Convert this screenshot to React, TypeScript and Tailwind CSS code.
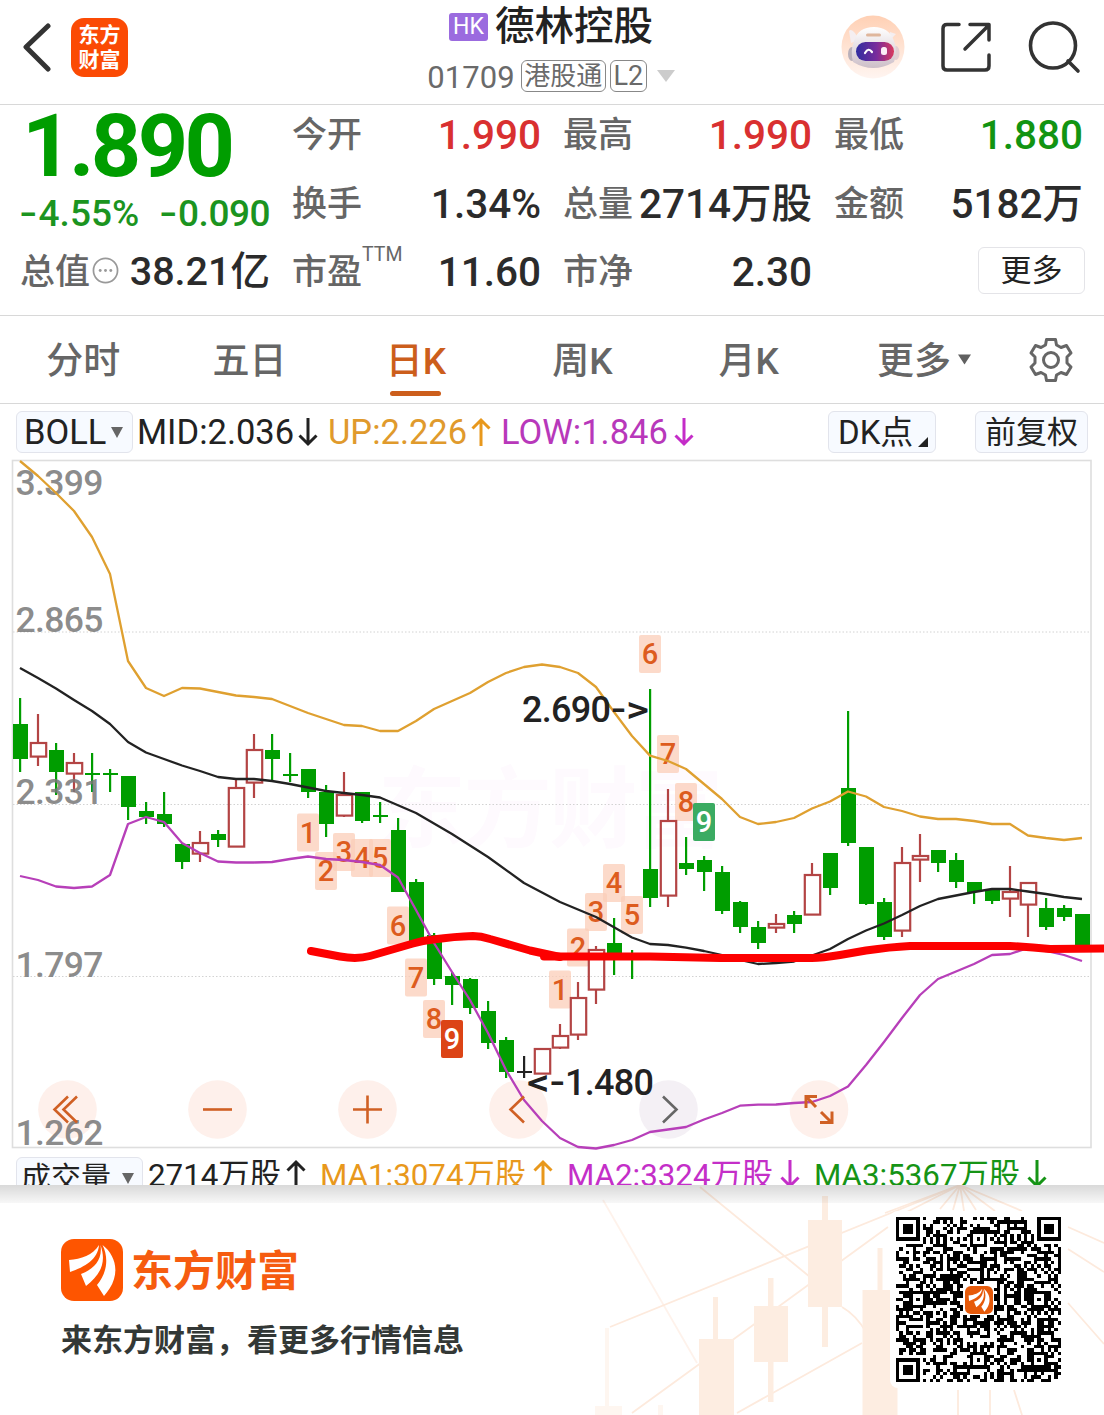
import { type ReactNode } from "react";

import { clsx } from "clsx";

type Tone = "up" | "down" | "flat";

// [tone, high, low, body top, body bottom]
type Candle = [Tone, number, number, number, number];

const CANDLES: Candle[] = [
  ["down", 698, 772, 724, 759],
  ["up", 714, 766, 742, 757],
  ["down", 743, 795, 750, 772],
  ["up", 753, 792, 762, 774],
  ["down", 753, 792, 773, 775],
  ["down", 769, 792, 773, 775],
  ["down", 776, 820, 776, 807],
  ["down", 802, 824, 811, 817],
  ["down", 792, 827, 814, 824],
  ["down", 843, 869, 844, 862],
  ["up", 831, 862, 842, 854],
  ["down", 830, 847, 834, 840],
  ["up", 780, 847, 787, 847],
  ["up", 734, 798, 749, 783],
  ["down", 734, 782, 750, 759],
  ["down", 753, 782, 774, 776],
  ["down", 769, 798, 769, 792],
  ["down", 785, 837, 792, 824],
  ["up", 772, 817, 794, 816],
  ["down", 792, 823, 792, 821],
  ["down", 802, 823, 815, 817],
  ["down", 818, 892, 830, 892],
  ["down", 879, 942, 882, 942],
  ["down", 933, 985, 935, 979],
  ["down", 972, 1005, 976, 985],
  ["down", 978, 1014, 979, 1008],
  ["down", 1001, 1049, 1011, 1043],
  ["down", 1037, 1078, 1040, 1072],
  ["flat", 1056, 1078, 1071, 1073],
  ["up", 1048, 1074, 1048, 1074],
  ["up", 1024, 1049, 1035, 1048],
  ["up", 982, 1040, 997, 1035],
  ["up", 946, 1004, 949, 990],
  ["down", 918, 975, 943, 957],
  ["down", 950, 979, 956, 958],
  ["down", 689, 907, 869, 898],
  ["up", 789, 907, 820, 896],
  ["down", 837, 875, 863, 869],
  ["down", 856, 891, 860, 872],
  ["down", 866, 914, 872, 911],
  ["down", 901, 933, 902, 927],
  ["down", 921, 949, 927, 943],
  ["up", 914, 933, 923, 928],
  ["down", 911, 933, 915, 924],
  ["up", 863, 915, 874, 915],
  ["down", 853, 895, 853, 888],
  ["down", 711, 846, 788, 843],
  ["down", 847, 905, 847, 904],
  ["down", 898, 940, 902, 937],
  ["up", 847, 937, 862, 931],
  ["up", 834, 882, 855, 860],
  ["down", 850, 872, 850, 863],
  ["down", 853, 888, 860, 882],
  ["down", 882, 904, 882, 892],
  ["down", 888, 904, 889, 901],
  ["up", 866, 917, 891, 899],
  ["up", 882, 937, 882, 905],
  ["down", 898, 930, 908, 927],
  ["down", 905, 921, 908, 917],
  ["down", 914, 948, 914, 948],
];

const UPPER =
  "20,461 38,476 56,493 74,511 92,537 110,574 128,661 146,688 164,696 182,688 200,688.5 218,692 236,695.5 254,697 272,699 290,706 308,713 326,719 344,725 362,726 380,731 398,731 416,721 434,709 452,701 470,693 488,682 506,673 524,667 542,664.5 560,667 578,673 596,687 614,712 632,736 650,755.6 668,761 686,769 704,784 722,799 740,817 758,824 776,822 794,818 812,808.5 830,801.5 848,791.5 866,796.5 884,807 902,811 920,816.5 938,819 956,819 974,821 992,824 1010,824 1028,835.5 1046,838 1064,840 1082,838";
const MIDDLE =
  "20,668 38,678 56,688.5 74,700 92,711 110,724 128,742 146,752.5 164,759 182,765.5 200,771 218,777 236,779 254,779 272,781 290,784 308,787.5 326,791 344,793 362,795 380,797.5 416,813 452,834 488,857 524,883 560,902 596,917 632,937.5 650,944 668,945 686,947.7 704,951 722,955 740,960 758,964 776,963 794,961.5 812,955.5 830,949 848,939 866,930.5 884,923.5 902,915 920,906 938,899 956,895.5 974,892 992,889 1010,889 1028,891.5 1046,894 1064,897 1082,899";
const LOWER =
  "20,876 38,880 56,886.5 74,888 92,886.5 110,875 128,824 146,817 164,822 182,843 200,853 218,861.5 236,862.5 254,862.5 272,862 290,859 308,856.5 326,859 344,860 362,862 380,865 398,877.5 416,910 434,943 452,972 470,1000 488,1033 506,1070 524,1100 542,1121 560,1138 578,1147 596,1148.5 614,1145 632,1140 650,1132 668,1129.5 686,1127 704,1119.5 722,1113 740,1105.7 758,1104.7 776,1104.5 794,1103 812,1102 830,1096 848,1086.5 866,1065 884,1042 902,1018 920,995 938,979 956,971.5 974,964 992,955 1010,954 1028,948 1046,951 1064,955 1082,961";

const SUPPORT_LEFT =
  "M311 951 L340 956.5 Q357 959.5 370 956 L413 943.5 Q423 940.5 433 939.5 Q455 936.5 473 936 Q481 936 490 939 L530 950.5 L560 957";
const SUPPORT_RIGHT =
  "M544 956.5 H650 L720 958 H812 Q822 958 840 955 L866 950.5 Q890 947 910 946 H1010 Q1030 947 1050 949 L1110 948.5";

// [digit, x centre, y centre]
const MARKS: [string, number, number][] = [
  ["1", 308, 832.5],
  ["2", 326, 871],
  ["3", 344, 852],
  ["4", 362, 858],
  ["5", 380, 858],
  ["6", 398, 925.5],
  ["7", 416, 977.5],
  ["8", 434, 1019],
  ["1", 560, 989.5],
  ["2", 578, 947.5],
  ["3", 596, 912],
  ["4", 614, 883],
  ["5", 632, 915],
  ["6", 650, 654],
  ["7", 668, 754],
  ["8", 686, 802],
];

const AXIS: [string, number][] = [
  ["3.399", 494.5],
  ["2.865", 631.5],
  ["2.331", 803.5],
  ["1.797", 976.5],
  ["1.262", 1144.5],
];

const TONES: Record<Tone, string> = {
  up: "#b34444",
  down: "#009d00",
  flat: "#222222",
};

function CandleShape({ candle, x }: { candle: Candle; x: number }) {
  const [tone, high, low, top, bottom] = candle;
  const color = TONES[tone];

  if (tone === "up") {
    return (
      <g stroke={color} strokeWidth={2.2} fill="none">
        <path d={`M${x} ${high}V${top}M${x} ${bottom}V${low}`} />
        <rect x={x - 7.2} y={top + 1} width={15.4} height={bottom - top - 1.4} />
      </g>
    );
  }
  return (
    <g fill={color}>
      <rect x={x - 1} y={high} width={2.2} height={low - high} />
      <rect x={x - 7} y={top} width={15} height={bottom - top} />
    </g>
  );
}

type MarkProps = {
  x: number;
  y: number;
  digit: string;
  fill?: string;
  color?: string;
  solid?: boolean;
};

function Mark({
  x,
  y,
  digit,
  fill = "#fbcdb8",
  color = "#dd5c1e",
  solid = false,
}: MarkProps) {
  return (
    <g>
      <rect
        x={x - 11}
        y={y - 19}
        width={22}
        height={38}
        rx={2}
        fill={fill}
        fillOpacity={solid ? 1 : 0.75}
      />
      <text
        x={x}
        y={y + 10}
        textAnchor="middle"
        fontSize={29}
        fontWeight={500}
        fill={color}
      >
        {digit}
      </text>
    </g>
  );
}

function KLineChart() {
  return (
    <svg
      viewBox="0 456 1104 696"
      className="block h-[696px] w-[1104px]"
      fontFamily='Roboto, "Noto Sans CJK SC", sans-serif'
    >
      <text x="378" y="840" fontSize="88" fontWeight="700" textLength="345" fill="#fefafe">
        东方财富
      </text>
      <path
        d="M13 632H1090M13 804.5H1090M13 976.5H1090"
        stroke="#d2d2d2"
        strokeDasharray="1.5 2"
      />
      <rect
        x="12.5"
        y="460.5"
        width="1078.5"
        height="687"
        fill="none"
        stroke="#dedede"
        strokeWidth="1.6"
      />

      {[67.5, 217.5, 367.5, 518.5, 819].map((x) => (
        <circle key={x} cx={x} cy="1109.5" r="29.3" fill="#fef0eb" />
      ))}
      <circle cx="668.5" cy="1109.5" r="29.3" fill="#f4f0f5" />

      {MARKS.map(([digit, x, y]) => (
        <Mark key={`${digit}-${x}`} digit={digit} x={x} y={y} />
      ))}
      {CANDLES.map((candle, i) => (
        <CandleShape key={i} candle={candle} x={20 + i * 18} />
      ))}

      <g fontSize="35.5" fontWeight="500" fill="#777777" fillOpacity="0.85">
        {AXIS.map(([label, y]) => (
          <text key={label} x="15.5" y={y} textLength="88">
            {label}
          </text>
        ))}
      </g>

      <g fill="none" strokeWidth="2.3" strokeLinejoin="round">
        <polyline points={UPPER} stroke="#dfa030" />
        <polyline points={MIDDLE} stroke="#222222" />
        <polyline points={LOWER} stroke="#b73fb9" />
      </g>

      <Mark digit="9" x={452} y={1039} fill="#dc4416" color="#ffffff" solid />
      <Mark digit="9" x={704} y={822} fill="#3bab62" color="#ffffff" solid />

      <g fontSize="36" fontWeight="500" fill="#222222">
        <text x="522" y="722" textLength="89">
          2.690
        </text>
        <text x="611" y="722" textLength="38" lengthAdjust="spacingAndGlyphs">
          -&gt;
        </text>
        <text x="527" y="1094.5" textLength="38" lengthAdjust="spacingAndGlyphs">
          &lt;-
        </text>
        <text x="565" y="1094.5" textLength="89">
          1.480
        </text>
      </g>

      <g
        fill="none"
        stroke="#fd0000"
        strokeWidth="8"
        strokeLinecap="round"
        strokeLinejoin="round"
      >
        <path d={SUPPORT_LEFT} />
        <path d={SUPPORT_RIGHT} />
      </g>

      <g fill="none" stroke="#d06024" strokeWidth="2.6">
        <path d="M68 1096.5L54.5 1109.5L68 1122.5M77 1096.5L63.5 1109.5L77 1122.5" />
        <path d="M203 1109.5H232" />
        <path d="M353 1109.5H382M367.5 1095.5V1123.5" />
        <path d="M524 1096.5L510.5 1109.5L524 1122.5" />
        <path
          strokeWidth="3"
          d="M806 1108V1096.5H817M806.5 1097L816 1107M821 1112L831 1122M820 1122.5H832V1111.5"
        />
        <path stroke="#666666" d="M663 1096.5L676.5 1109.5L663 1122.5" />
      </g>
    </svg>
  );
}

function LogoMark({ className, fill }: { className: string; fill: string }) {
  return (
    <svg viewBox="0 0 62 62" className={className}>
      <rect width="62" height="62" rx="13" fill={fill} />
      <g fill="#fff">
        <path d="M8 21C20 20 32 16 38 6C37 20 24 28 9 33Z" />
        <path d="M39.500 6C42 22 31 31 20 35L25 47C39 36 46 24 39.500 6Z" />
        <path d="M41.500 6C52 14 57 27 53 40C51 47 47 52 43 57L36 46C46 34 48 19 41.500 6Z" />
      </g>
    </svg>
  );
}

function RobotAvatar() {
  return (
    <svg viewBox="0 0 64 64" className="size-16">
      <defs>
        <linearGradient id="halo" x1="0" y1="0" x2="0" y2="1">
          <stop offset="0" stopColor="#ffd0b4" />
          <stop offset="1" stopColor="#fff5f1" />
        </linearGradient>
        <linearGradient id="visor">
          <stop offset="0" stopColor="#2f2da0" />
          <stop offset="0.55" stopColor="#7a2c9c" />
          <stop offset="1" stopColor="#d93a5e" />
        </linearGradient>
        <linearGradient id="shell" x1="0" y1="0" x2="0" y2="1">
          <stop offset="0" stopColor="#ffffff" />
          <stop offset="1" stopColor="#cdbfc8" />
        </linearGradient>
      </defs>
      <circle cx="32" cy="32" r="31.5" fill="url(#halo)" />
      <ellipse cx="11" cy="39" rx="4" ry="7" fill="#b9b0ba" />
      <ellipse cx="55" cy="38" rx="3.5" ry="7" fill="#e3cfd2" />
      <path d="M8 16Q10 13 14 18L18 25L10 28ZM55 19L49 17L48 26Z" fill="#f5eef0" />
      <path
        d="M13 26Q17 12 33 12Q48 12 53 26Q57 36 53 47Q32 59 12 47Q9 36 13 26Z"
        fill="url(#shell)"
      />
      <rect x="25" y="18.5" width="15" height="3" rx="1.5" fill="#dfb69c" />
      <rect x="15" y="27" width="38" height="19" rx="9.5" fill="url(#visor)" />
      <path
        d="M24 38Q27.5 32 31 37"
        fill="none"
        stroke="#fff"
        strokeWidth="2.2"
        strokeLinecap="round"
      />
      <rect x="40" y="32" width="6" height="8" rx="2.5" fill="#fbeef6" />
    </svg>
  );
}

function Header() {
  return (
    <header className="flex h-[105px] border-b-[1.5px] border-[#d8d8d8]">
      <div className="flex w-[372px] items-start pt-[18px] pl-[22px]">
        <svg viewBox="0 0 30 50" className="mt-1 h-[50px] w-[30px]">
          <path
            d="M26 4L4 25L26 47"
            fill="none"
            stroke="#333"
            strokeWidth="5"
            strokeLinejoin="round"
            strokeLinecap="round"
          />
        </svg>
        <div className="ml-[19px] flex h-[59px] w-[57px] flex-col items-center justify-center gap-[3px] rounded-[13px] bg-[#fb4a04] text-[21px] leading-[22px] font-bold text-white">
          <span>东方</span>
          <span>财富</span>
        </div>
      </div>

      <div className="flex w-[358px] flex-col items-center">
        <div className="mt-1 flex h-[45px] items-center gap-[7px]">
          <span className="flex h-7 w-[39px] items-center justify-center rounded-[3px] bg-[#9b6bdf] text-[23px] leading-none text-white">
            HK
          </span>
          <h1 className="text-[39.5px] leading-none font-medium text-[#222]">德林控股</h1>
        </div>
        <div className="mt-[11px] flex h-8 items-center leading-none text-[#6a6a6a]">
          <span className="pt-[2px] text-[31px] tracking-[0.1px]">01709</span>
          <span className="ml-[6px] flex h-8 w-[85px] items-center justify-center rounded-md border-[1.5px] border-[#888] text-[26px]">
            港股通
          </span>
          <span className="ml-1 flex h-8 w-[37px] items-center justify-center rounded-md border-[1.5px] border-[#888] text-[27px]">
            L2
          </span>
          <svg viewBox="0 0 18 12" className="ml-[10px] h-3 w-[18px]">
            <path d="M0 0H18L9 12Z" fill="#ccc" />
          </svg>
        </div>
      </div>

      <div className="flex flex-1 items-start pt-[15px] pl-[111px]">
        <RobotAvatar />
        <svg
          viewBox="0 0 54 54"
          className="mt-[5px] ml-[34px] size-[54px]"
          fill="none"
          stroke="#333"
          strokeWidth="3.5"
          strokeLinecap="round"
          strokeLinejoin="round"
        >
          <path d="M20 4.5H8Q4 4.5 4 8.5V46Q4 50 8 50H46Q50 50 50 46V35M31 4.5H50V20M49 6L26 29" />
        </svg>
        <svg
          viewBox="0 0 54 54"
          className="mt-[5px] ml-[34px] size-[54px]"
          fill="none"
          stroke="#333"
          strokeWidth="3.6"
          strokeLinecap="round"
        >
          <circle cx="26" cy="25.5" r="22.5" />
          <path d="M41 41L51 51" />
        </svg>
      </div>
    </header>
  );
}

type QuoteCellProps = {
  label: ReactNode;
  value: string;
  className?: string;
};

function QuoteCell({ label, value, className }: QuoteCellProps) {
  return (
    <div className="flex items-center justify-between leading-none font-medium whitespace-nowrap">
      <span className="pt-px text-[35px] text-[#666]">{label}</span>
      <span className={clsx("pt-px text-[40.5px]", className ?? "text-[#2b2b2b]")}>
        {value}
      </span>
    </div>
  );
}

function Minus() {
  return <span className="mr-[4px] ml-[2px] inline-block origin-center scale-x-140">-</span>;
}

function QuotePanel() {
  return (
    <section className="flex h-[211px] gap-[22px] border-b-[1.5px] border-[#d8d8d8] pr-[21px] pl-5">
      <div className="flex w-[250px] flex-col leading-none font-medium whitespace-nowrap text-[#009d00]">
        <div className="h-[86px] pl-[2px] text-[88px] leading-[81px] font-bold tracking-[-3.6px]">
          1.890
        </div>
        <div className="flex h-[44px] items-center justify-between text-[37px] text-[#1b9420]">
          <span>
            <Minus />
            4.55%
          </span>
          <span className="tracking-[-0.5px]">
            <Minus />
            0.090
          </span>
        </div>
        <div className="mt-[15px] flex h-[44px] items-center">
          <span className="text-[35px] text-[#666]">总值</span>
          <svg viewBox="0 0 28 28" className="-mt-1 ml-[2px] size-[27px]">
            <circle cx="14" cy="14" r="12.5" fill="none" stroke="#999" strokeWidth="1.8" />
            <g fill="#999">
              <circle cx="8.5" cy="14" r="1.5" />
              <circle cx="14" cy="14" r="1.5" />
              <circle cx="19.5" cy="14" r="1.5" />
            </g>
          </svg>
          <span className="ml-auto text-[39.5px] text-[#2b2b2b]">38.21亿</span>
        </div>
      </div>
      <div className="grid flex-1 grid-cols-3 grid-rows-[60px_77px_60px] gap-x-[22px]">
        <QuoteCell label="今开" value="1.990" className="text-[#d93030]" />
        <QuoteCell label="最高" value="1.990" className="text-[#d93030]" />
        <QuoteCell label="最低" value="1.880" className="text-[#129412]" />
        <QuoteCell label="换手" value="1.34%" />
        <QuoteCell label="总量" value="2714万股" />
        <QuoteCell label="金额" value="5182万" />
        <QuoteCell
          label={
            <span className="flex">
              市盈
              <sup className="top-[-8px] -mt-[2px] text-[19.5px] leading-none font-normal">
                TTM
              </sup>
            </span>
          }
          value="11.60"
        />
        <QuoteCell label="市净" value="2.30" />
        <div className="flex items-center justify-end">
          <button className="mt-[-4px] -mr-[2px] h-[47px] w-[107px] rounded-md border-[1.5px] border-[#e4e4e8] text-[31px] leading-none text-[#222]">
            更多
          </button>
        </div>
      </div>
    </section>
  );
}

const TABS = ["分时", "五日", "日K", "周K", "月K"];

function PeriodTabs() {
  return (
    <nav className="flex h-[88px] border-b-[1.5px] border-[#d8d8d8] text-[37px] leading-none font-medium text-[#666]">
      {TABS.map((tab) => (
        <div
          key={tab}
          className={clsx(
            "flex w-[166.4px] flex-col items-center pt-[27px]",
            tab === "日K" && "text-[#cc5e1c]",
          )}
        >
          {tab}
          {tab === "日K" && <div className="mt-[11px] h-[5px] w-[51px] rounded-full bg-[#cc5e1c]" />}
        </div>
      ))}
      <div className="flex w-[184px] items-start justify-center pt-[27px]">
        更多
        <svg viewBox="0 0 14 11" className="mt-[11px] ml-[7px] h-[11px] w-[13px]">
          <path d="M0 0H14L7 11Z" fill="#606060" />
        </svg>
      </div>
      <svg
        viewBox="0 0 46 46"
        className="mt-[21px] ml-[12px] size-[46px]"
        fill="none"
        stroke="#666"
        strokeWidth="3"
        strokeLinejoin="round"
      >
        <path d="M18.5 2.5H27.5L28.5 8L33 10.5L38.5 8.5L43 16L39 20V26L43 30L38.5 37.5L33 35.5L28.5 38L27.5 43.5H18.5L17.5 38L13 35.5L7.5 37.5L3 30L7 26V20L3 16L7.5 8.5L13 10.5L17.5 8Z" />
        <circle cx="23" cy="23" r="7.5" />
      </svg>
    </nav>
  );
}

function TrendArrow({ up = false }: { up?: boolean }) {
  return (
    <svg
      viewBox="0 0 20 30"
      className={clsx("h-[30px] w-5", up && "rotate-180")}
      fill="none"
      stroke="currentColor"
      strokeWidth="3"
    >
      <path d="M10 1V27M1.5 18.5L10 27L18.5 18.5" />
    </svg>
  );
}

function IndicatorBar() {
  return (
    <div className="flex h-[52px] items-center pt-1 pr-[16px] pl-4 text-[34.5px] leading-none whitespace-nowrap text-[#222]">
      <div className="flex h-[42px] w-[117px] items-center rounded-md border-[1.5px] border-[#e2e4ec] bg-[#f7faff] pl-[7px]">
        <span className="w-[86px]">BOLL</span>
        <svg viewBox="0 0 12 11" className="ml-[1px] h-[11px] w-3">
          <path d="M0 0H12L6 11Z" fill="#666" />
        </svg>
      </div>
      <span className="ml-1 w-[157px]">MID:2.036</span>
      <span className="ml-1">
        <TrendArrow />
      </span>
      <span className="ml-[10px] w-[140px] text-[#e09a2c]">UP:2.226</span>
      <span className="ml-[3px] text-[#e8981c]">
        <TrendArrow up />
      </span>
      <span className="ml-[10px] w-[168px] text-[#b838ba]">LOW:1.846</span>
      <span className="ml-[5px] text-[#c42cc8]">
        <TrendArrow />
      </span>
      <div className="ml-auto flex h-[42px] w-[108px] items-center rounded-md border-[1.5px] border-[#e2e4ec] bg-[#f7faff] pl-[9px] text-[33px]">
        DK点
        <svg viewBox="0 0 10 10" className="mt-[20px] ml-[5px] size-[10px]">
          <path d="M10 0V10H0Z" fill="#222" />
        </svg>
      </div>
      <div className="ml-[39px] flex h-[42px] w-[113px] items-center justify-center rounded-md border-[1.5px] border-[#e2e4ec] bg-[#f7faff] text-[31px]">
        前复权
      </div>
    </div>
  );
}

type MovingAverageProps = {
  label: string;
  up?: boolean;
  className: string;
};

function MovingAverage({ label, up, className }: MovingAverageProps) {
  return (
    <div className={clsx("flex w-[247px] shrink-0 items-start", className)}>
      <span className="w-[211px]">{label}</span>
      <span className="mt-[7px] ml-[2px]">
        <TrendArrow up={up} />
      </span>
    </div>
  );
}

function VolumeBar() {
  return (
    <div className="flex h-[33px] items-start overflow-hidden pl-4 text-[31.3px] leading-[47px] whitespace-nowrap text-[#222]">
      <div className="mt-[5px] flex h-[42px] w-[127px] shrink-0 items-center rounded-md border-[1.5px] border-[#e2e4ec] bg-[#f7faff] pl-[4px] text-[30px] leading-none">
        成交量
        <svg viewBox="0 0 12 11" className="ml-[11px] h-[11px] w-3">
          <path d="M0 0H12L6 11Z" fill="#666" />
        </svg>
      </div>
      <div className="ml-[5px] flex w-[172px] shrink-0 items-start">
        <span className="w-[134px]">2714万股</span>
        <span className="mt-[7px] ml-[4px]">
          <TrendArrow up />
        </span>
      </div>
      <MovingAverage label="MA1:3074万股" up className="text-[#e8981c]" />
      <MovingAverage label="MA2:3324万股" className="text-[#c42fc8]" />
      <MovingAverage label="MA3:5367万股" className="text-[#169416]" />
    </div>
  );
}

const QR_SIZE = 49;

function buildQrPath() {
  let seed = 20917;
  const random = () => {
    seed = (seed * 1103515245 + 12345) % 2147483648;
    return seed / 2147483648;
  };
  const finders = [
    [3, 3],
    [45, 3],
    [3, 45],
  ];
  const aligns = [
    [24, 6],
    [6, 24],
    [42, 24],
    [24, 42],
    [42, 42],
  ];
  let d = "";
  for (let y = 0; y < QR_SIZE; y++) {
    for (let x = 0; x < QR_SIZE; x++) {
      let on = random() > 0.49;
      if (x === 6 || y === 6) on = (x + y) % 2 === 0;
      for (const [cx, cy] of aligns) {
        const r = Math.max(Math.abs(x - cx), Math.abs(y - cy));
        if (r <= 2) on = r !== 1;
      }
      for (const [cx, cy] of finders) {
        const r = Math.max(Math.abs(x - cx), Math.abs(y - cy));
        if (r <= 4) on = r === 3 || r <= 1;
      }
      if (Math.max(Math.abs(x - 24), Math.abs(y - 24)) <= 4) on = false;
      if (on) d += `M${x} ${y}h1v1h-1z`;
    }
  }
  return d;
}

const QR_PATH = buildQrPath();

function QrCode() {
  return (
    <div className="relative flex size-[177px] items-center justify-center rounded-lg bg-white">
      <svg viewBox="0 0 49 49" className="size-[165px]" shapeRendering="crispEdges">
        <path d={QR_PATH} fill="#000" />
      </svg>
      <LogoMark className="absolute size-[28px]" fill="#e65a0a" />
    </div>
  );
}

function FooterArt() {
  return (
    <svg viewBox="560 1185 544 230" className="absolute top-0 right-0 h-[230px] w-[544px]">
      <g stroke="#fdeadd" strokeWidth="1.8" fill="none">
        <path d="M603 1200L697 1363" opacity="0.6" />
        <path d="M700 1187L810 1277M610 1327L955 1187M632 1413L888 1227M737 1413L862 1343M842 1307Q856 1315 866 1332" />
        <path d="M960 1185L885 1213M960 1185L905 1213M960 1185L940 1209M960 1185L953 1210M960 1185L964 1211M960 1185L976 1210M960 1185L995 1211M960 1185L1022 1211" />
        <path d="M1068 1227L1104 1243M1068 1249L1104 1272M1068 1303L1104 1344M958 1390V1415M990 1390V1415M1014 1390L1022 1415" />
      </g>
      <g fill="#fdede1">
        <path
          d="M605 1328H609V1406H622V1415H595V1406H605ZM658 1405H663V1415H658Z"
          opacity="0.5"
        />
        <path d="M713 1297H718V1339H734V1415H699V1339H713Z" />
        <path d="M768 1278H773.5V1306H788V1362H773.5V1402H768V1362H754V1306H768Z" />
        <path d="M822 1196H828V1220H842V1307H828V1347H822V1307H808V1220H822Z" />
        <path d="M877.5 1248H882.5V1290H897.5V1415H862.5V1290H877.5Z" />
      </g>
    </svg>
  );
}

function Footer() {
  return (
    <footer className="relative h-[230px] overflow-hidden bg-white">
      <FooterArt />
      <div className="absolute inset-x-0 top-0 h-[18px] bg-linear-to-b from-black/15 to-black/3" />
      <div className="relative flex items-start justify-between pt-[26px] pr-[37px] pl-[61px]">
        <div>
          <div className="mt-[28px] flex items-center gap-[8px]">
            <LogoMark className="size-[62px]" fill="#fe5500" />
            <span className="pt-1 text-[42px] leading-none font-bold text-[#f65c10]">东方财富</span>
          </div>
          <p className="mt-[24px] text-[31px] leading-none font-bold text-[#333836]">
            来东方财富，看更多行情信息
          </p>
        </div>
        <QrCode />
      </div>
    </footer>
  );
}

export default function App() {
  return (
    <main className="h-[1415px] w-[1104px] overflow-hidden bg-white font-[Roboto,'Noto_Sans_CJK_SC',sans-serif]">
      <Header />
      <QuotePanel />
      <PeriodTabs />
      <IndicatorBar />
      <KLineChart />
      <VolumeBar />
      <Footer />
    </main>
  );
}
